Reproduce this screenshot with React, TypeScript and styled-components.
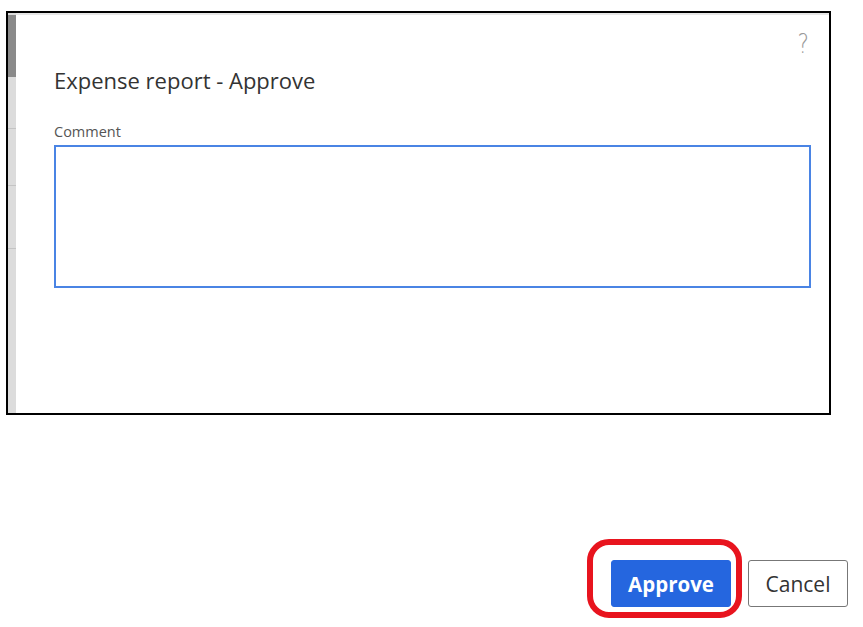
import React from "react";
import styled, { createGlobalStyle } from "styled-components";

const GlobalStyle = createGlobalStyle`
  html, body {
    margin: 0;
    padding: 0;
    background: #ffffff;
  }
  body {
    font-family: "Open Sans", "Noto Sans", "Liberation Sans", sans-serif;
    color: #333333;
  }
`;

const Page = styled.div`
  width: 863px;
  height: 627px;
  display: flex;
  flex-direction: column;
  box-sizing: border-box;
  padding: 11px 0 0 6px;
`;

const Frame = styled.section`
  width: 825px;
  height: 404px;
  box-sizing: border-box;
  border: 2px solid #000000;
  display: flex;
  background: #ffffff;
`;

const ScrollStrip = styled.div`
  width: 8px;
  flex-shrink: 0;
  background: #dcdcdc;
  display: flex;
  flex-direction: column;
`;

const ScrollThumb = styled.div`
  height: 62px;
  margin-top: 2px;
  background: #8a8a8a;
`;

const StripGap = styled.div<{ $h: number }>`
  height: ${(p) => p.$h}px;
  border-bottom: 1px solid #c4c4c4;
`;

const Content = styled.div`
  flex: 1;
  display: flex;
  flex-direction: column;
  border-top: 2px solid #e6e6e6;
  padding: 14px 18px 0 38px;
`;

const HelpRow = styled.div`
  display: flex;
  justify-content: flex-end;
  height: 30px;
`;

const HelpButton = styled.span`
  font-family: "DejaVu Sans", "Liberation Sans", sans-serif;
  font-size: 27px;
  font-weight: 300;
  line-height: 30px;
  color: #9a9a9a;
  margin-right: 1px;
  transform: scaleX(0.8);
`;

const Title = styled.h1`
  margin: 7px 0 0 0;
  font-size: 22px;
  font-weight: 400;
  line-height: 28px;
  color: #333333;
`;

const Label = styled.label`
  margin-top: 30px;
  font-size: 14.5px;
  line-height: 16px;
  color: #555555;
`;

const CommentBox = styled.textarea`
  margin-top: 5px;
  width: 100%;
  height: 143px;
  box-sizing: border-box;
  border: 2px solid #4a84e4;
  border-radius: 0;
  outline: none;
  resize: none;
  font-family: inherit;
  font-size: 14px;
  padding: 6px 8px;
`;

const Footer = styled.div`
  flex: 1;
  display: flex;
  justify-content: flex-end;
  align-items: flex-start;
  gap: 17px;
  padding: 145px 15px 0 0;
`;

const Highlight = styled.div`
  position: relative;
`;

const Ring = styled.div`
  position: absolute;
  left: -24px;
  top: -21px;
  right: -11px;
  bottom: -11px;
  border: 6px solid #e8141e;
  border-radius: 22px;
  pointer-events: none;
`;

const Button = styled.button<{ $primary?: boolean }>`
  height: 47px;
  box-sizing: border-box;
  border-radius: 3px;
  font-family: "Open Sans", "Noto Sans", sans-serif;
  font-size: 20.5px;
  cursor: pointer;
  ${(p) =>
    p.$primary
      ? `
    width: 120px;
    background: #2566df;
    border: 1px solid #2566df;
    color: #ffffff;
    font-weight: 700;
  `
      : `
    width: 100px;
    background: #ffffff;
    border: 1px solid #777777;
    color: #333333;
    font-weight: 400;
    font-size: 21px;
  `}
`;

export default function App() {
  return (
    <>
      <GlobalStyle />
      <Page>
        <Frame>
          <ScrollStrip>
            <ScrollThumb />
            <StripGap $h={51} />
            <StripGap $h={56} />
            <StripGap $h={62} />
          </ScrollStrip>
          <Content>
            <HelpRow>
              <HelpButton>?</HelpButton>
            </HelpRow>
            <Title>Expense report - Approve</Title>
            <Label htmlFor="comment">Comment</Label>
            <CommentBox id="comment" />
          </Content>
        </Frame>
        <Footer>
          <Highlight>
            <Ring />
            <Button $primary>Approve</Button>
          </Highlight>
          <Button>Cancel</Button>
        </Footer>
      </Page>
    </>
  );
}
